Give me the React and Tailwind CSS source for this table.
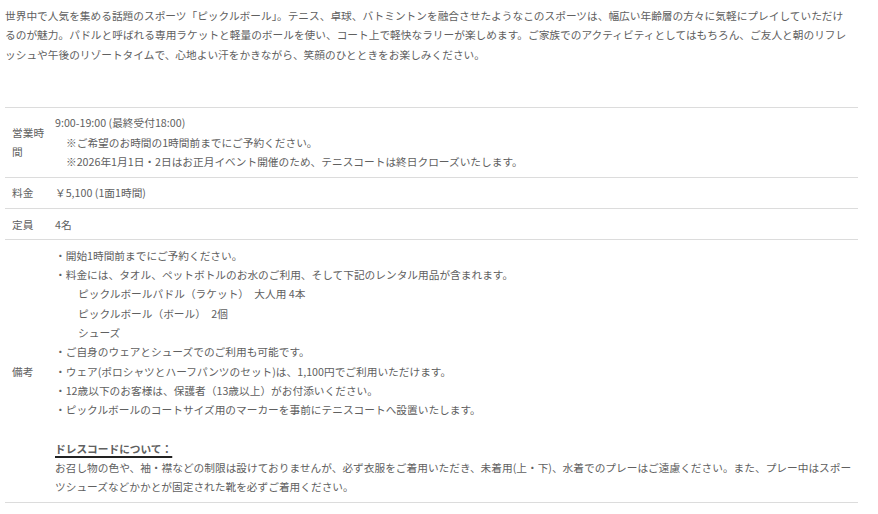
const font = { fontFamily: '"Noto Sans CJK JP", "Noto Sans", sans-serif' }

function Row({ label, children }){
  return (
    <tr className="border-b border-[#dcdcdc]">
      <td className="w-[48px] pl-[7px] pr-[3px] py-[5.5px] align-middle">{label}</td>
      <td className="pl-[2px] pr-[6px] py-[5.5px] align-middle">{children}</td>
    </tr>
  )
}

export default function App(){
  return (
    <div className="bg-white w-[878px] h-[514px] overflow-hidden text-[#606060] text-[10.7px] leading-[19.3px]" style={font}>
      <div className="w-[853px] ml-[5px] pt-[6px]">
        <p>
          世界中で人気を集める話題のスポーツ「ピックルボール」。テニス、卓球、バトミントンを融合させたようなこのスポーツは、幅広い年齢層の方々に気軽にプレイしていただけ<br />
          るのが魅力。パドルと呼ばれる専用ラケットと軽量のボールを使い、コート上で軽快なラリーが楽しめます。ご家族でのアクティビティとしてはもちろん、ご友人と朝のリフレ<br />
          ッシュや午後のリゾートタイムで、心地よい汗をかきながら、笑顔のひとときをお楽しみください。
        </p>

        <table className="w-full mt-[43px] border-collapse border-t border-[#dcdcdc]">
          <tbody>
            <Row label="営業時間">
              <div>9:00-19:00 (最終受付18:00)</div>
              <div className="pl-[11px]">※ご希望のお時間の1時間前までにご予約ください。</div>
              <div className="pl-[11px]">※2026年1月1日・2日はお正月イベント開催のため、テニスコートは終日クローズいたします。</div>
            </Row>
            <Row label="料金">
              <div>￥5,100 (1面1時間)</div>
            </Row>
            <Row label="定員">
              <div>4名</div>
            </Row>
            <Row label="備考">
              <div>・開始1時間前までにご予約ください。</div>
              <div>・料金には、タオル、ペットボトルのお水のご利用、そして下記のレンタル用品が含まれます。</div>
              <div className="pl-[23px]">ピックルボールパドル（ラケット）　大人用 4本</div>
              <div className="pl-[23px]">ピックルボール（ボール）　2個</div>
              <div className="pl-[23px]">シューズ</div>
              <div>・ご自身のウェアとシューズでのご利用も可能です。</div>
              <div>・ウェア(ポロシャツとハーフパンツのセット)は、1,100円でご利用いただけます。</div>
              <div>・12歳以下のお客様は、保護者（13歳以上）がお付添いください。</div>
              <div>・ピックルボールのコートサイズ用のマーカーを事前にテニスコートへ設置いたします。</div>
              <div className="h-[19.3px]"></div>
              <div>
                <span className="font-bold underline decoration-[#222] decoration-[1.5px] underline-offset-[3px]">ドレスコードについて：</span>
              </div>
              <div>お召し物の色や、袖・襟などの制限は設けておりませんが、必ず衣服をご着用いただき、未着用(上・下)、水着でのプレーはご遠慮ください。また、プレー中はスポーツシューズなどかかとが固定された靴を必ずご着用ください。</div>
            </Row>
          </tbody>
        </table>
      </div>
    </div>
  )
}
